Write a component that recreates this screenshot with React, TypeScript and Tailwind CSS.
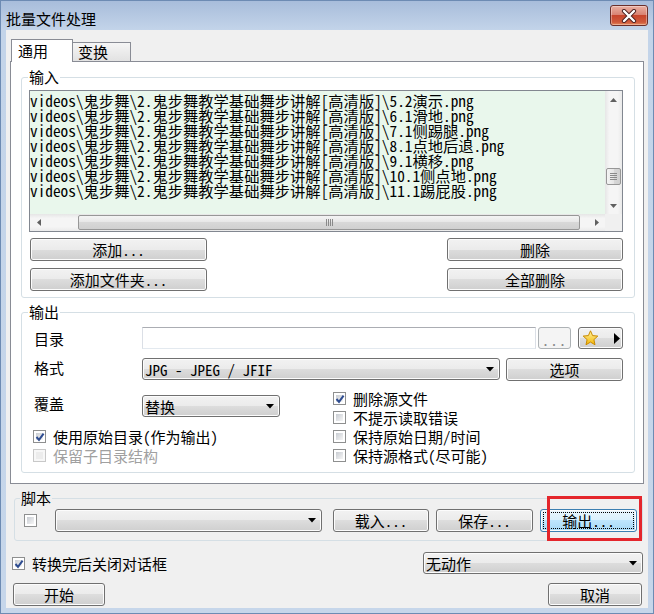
import React from "react";

const FONT = "font-['Noto_Sans_Mono_CJK_SC','Noto_Sans_CJK_SC',sans-serif]";
const BTN =
  "flex items-center justify-center rounded-[3px] border border-[#707070] bg-[linear-gradient(#f2f2f2_0%,#ebebeb_50%,#dddddd_50%,#cfcfcf_100%)] shadow-[inset_0_0_0_1px_#fcfcfc] text-[15px] leading-[17px] text-black";

function Btn({ className = "", children }: { className?: string; children?: React.ReactNode }) {
  return <div className={`${BTN} ${className}`}>{children}</div>;
}

function FocusBtn({ className = "", children }: { className?: string; children?: React.ReactNode }) {
  return (
    <div
      className={`relative flex items-center justify-center rounded-[3px] border border-[#3c7fb1] bg-[linear-gradient(#eaf6fd_0%,#d9f0fc_50%,#bee6fd_50%,#a7d9f5_100%)] shadow-[inset_0_0_0_1px_#fcfcfc] text-[15px] leading-[17px] ${className}`}
    >
      <span className="absolute inset-[2px] border border-dotted border-black" />
      {children}
    </div>
  );
}

function Arrow() {
  return (
    <svg width="8" height="5" viewBox="0 0 8 5" className="shrink-0">
      <path d="M0 0H8L4 4.5Z" fill="#000" />
    </svg>
  );
}

function Combo({ className = "", children }: { className?: string; children?: React.ReactNode }) {
  return (
    <div
      className={`flex items-center rounded-[3px] border border-[#707070] bg-[linear-gradient(#f2f2f2_0%,#ebebeb_50%,#dddddd_50%,#cfcfcf_100%)] shadow-[inset_0_0_0_1px_#fcfcfc] pl-[2px] pr-[5px] text-[15px] leading-[17px] ${className}`}
    >
      <span className="flex-1 whitespace-nowrap">{children}</span>
      <Arrow />
    </div>
  );
}

function Box({ checked = false, disabled = false }: { checked?: boolean; disabled?: boolean }) {
  return (
    <div
      className={`relative shrink-0 w-[13px] h-[13px] border p-[2px] ${
        disabled ? "border-[#c8c8c8] bg-[#f7f7f7]" : "border-[#8e8f8f] bg-white"
      }`}
    >
      <div
        className={`w-full h-full ${
          disabled ? "bg-[#ececec]" : "bg-[linear-gradient(135deg,#c8ccd2,#f6f6f6)]"
        }`}
      />
      {checked && (
        <svg className="absolute left-[1px] top-[1px]" width="10" height="10" viewBox="0 0 10 10">
          <path d="M1.5 5L4 7.8L8.6 1.6" stroke="#2e4c90" strokeWidth="2" fill="none" />
        </svg>
      )}
    </div>
  );
}

function Check({
  label,
  checked = false,
  disabled = false,
  className = "",
}: {
  label: string;
  checked?: boolean;
  disabled?: boolean;
  className?: string;
}) {
  return (
    <div className={`flex items-center h-[19px] ${className}`}>
      <Box checked={checked} disabled={disabled} />
      <span className={`ml-[7px] text-[15px] leading-[17px] whitespace-nowrap ${disabled ? "text-[#a0a0a0]" : "text-black"}`}>
        {label}
      </span>
    </div>
  );
}

function Tri({ dir }: { dir: "up" | "down" | "left" | "right" }) {
  const d =
    dir === "up"
      ? "M0 4L3.5 0L7 4Z"
      : dir === "down"
      ? "M0 0L7 0L3.5 4Z"
      : dir === "left"
      ? "M4 0L4 7L0 3.5Z"
      : "M0 0L4 3.5L0 7Z";
  const w = dir === "up" || dir === "down" ? 7 : 4;
  const h = dir === "up" || dir === "down" ? 4 : 7;
  return (
    <svg width={w} height={h} viewBox={`0 0 ${w} ${h}`}>
      <path d={d} fill="#606060" />
    </svg>
  );
}

const files = ["5.2演示", "6.1滑地", "7.1侧踢腿", "8.1点地后退", "9.1横移", "10.1侧点地", "11.1踢屁股"];

function ListBox() {
  return (
    <div className="ml-[7px] mt-[12px] w-[594px] h-[142px] border border-[#828790] flex flex-col bg-[#e9f7ec]">
      <div className="flex h-[123px]">
        <div className="flex-1 pt-[2px] text-[15.3px] leading-[15px] text-black whitespace-nowrap">
          {files.map((f) => (
            <div key={f} className="h-[15px]">{`videos\\鬼步舞\\2.鬼步舞教学基础舞步讲解[高清版]\\${f}.png`}</div>
          ))}
        </div>
        <div className="w-[17px] flex flex-col bg-[linear-gradient(90deg,#e6e6e6,#f5f5f5_25%,#f5f5f5_75%,#eaeaea)]">
          <div className="h-[17px] flex items-center justify-center">
            <Tri dir="up" />
          </div>
          <div className="flex-1">
            <div className="mt-[60px] mx-[1px] h-[17px] rounded-[2px] border border-[#979797] bg-[linear-gradient(90deg,#f4f4f4,#e6e6e6_50%,#d8d8d8_50%,#d0d0d0)] flex flex-col items-center justify-center gap-[1px]">
              <div className="w-[7px] h-[1px] bg-[#8a8a8a]" />
              <div className="w-[7px] h-[1px] bg-[#8a8a8a]" />
              <div className="w-[7px] h-[1px] bg-[#8a8a8a]" />
              <div className="w-[7px] h-[1px] bg-[#8a8a8a]" />
            </div>
          </div>
          <div className="h-[17px] flex items-center justify-center">
            <Tri dir="down" />
          </div>
        </div>
      </div>
      <div className="flex h-[17px]">
        <div className="flex-1 flex bg-[linear-gradient(#e6e6e6,#f5f5f5_25%,#f5f5f5_75%,#eaeaea)]">
          <div className="w-[17px] flex items-center justify-center">
            <Tri dir="left" />
          </div>
          <div className="flex-1 flex py-[1px]">
            <div className="ml-[31px] w-[502px] rounded-[2px] border border-[#979797] bg-[linear-gradient(#f4f4f4,#e6e6e6_50%,#d8d8d8_50%,#d0d0d0)] flex items-center justify-center gap-[1px]">
              <div className="w-[1px] h-[7px] bg-[#8a8a8a]" />
              <div className="w-[1px] h-[7px] bg-[#8a8a8a]" />
              <div className="w-[1px] h-[7px] bg-[#8a8a8a]" />
              <div className="w-[1px] h-[7px] bg-[#8a8a8a]" />
            </div>
          </div>
          <div className="w-[17px] flex items-center justify-center">
            <Tri dir="right" />
          </div>
        </div>
        <div className="w-[17px] bg-[#f0f0f0]" />
      </div>
    </div>
  );
}

function Star() {
  return (
    <svg width="17" height="16" viewBox="0 0 17 16">
      <defs>
        <linearGradient id="sg" x1="0" y1="0" x2="0" y2="1">
          <stop offset="0" stopColor="#fff6a8" />
          <stop offset="1" stopColor="#f4b400" />
        </linearGradient>
      </defs>
      <path
        d="M8.5 0.8L10.6 5.6L15.8 6.1L11.9 9.6L13 14.8L8.5 12.1L4 14.8L5.1 9.6L1.2 6.1L6.4 5.6Z"
        fill="url(#sg)"
        stroke="#c98a00"
        strokeWidth="1"
        strokeLinejoin="round"
      />
    </svg>
  );
}

export default function App() {
  return (
    <div
      className={`w-[654px] h-[614px] flex flex-col bg-[linear-gradient(#a7bcda_0px,#c3d4e9_30px,#c6d6ea_100%)] shadow-[inset_0_0_0_1px_#6d8bb3] ${FONT} text-black select-none`}
    >
      {/* Title bar */}
      <div className="h-[30px] shrink-0 flex items-start">
        <span className="ml-[6px] mt-[10px] text-[15px] leading-[17px]">批量文件处理</span>
        <div className="ml-auto mr-[6px] mt-[5px] w-[38px] h-[21px] rounded-[3px] border border-[#6b2f2a] bg-[linear-gradient(#eab0a2_0%,#d98474_45%,#c7452c_50%,#cf5a3c_85%,#e68a5c_100%)] shadow-[inset_0_0_0_1px_rgba(255,255,255,0.35)] flex items-center justify-center">
          <svg width="16" height="14" viewBox="0 0 16 14">
            <path d="M3 2L13 12M13 2L3 12" stroke="#4a2020" strokeWidth="4.2" strokeLinecap="round" />
            <path d="M3 2L13 12M13 2L3 12" stroke="#ffffff" strokeWidth="2.4" strokeLinecap="round" />
          </svg>
        </div>
      </div>

      {/* Body */}
      <div className="h-[578px] shrink-0 mx-[6px] bg-[#f0f0f0] flex flex-col">
        <div className="pl-[4px] pt-[9px]">
          {/* Tabs */}
          <div className="flex h-[22px] items-start">
            <div className="relative z-10 ml-[1px] w-[62px] h-[23px] border border-b-0 border-[#898c95] bg-white pl-[6px] pt-[2px] text-[15px] leading-[17px]">
              通用
            </div>
            <div className="mt-[3px] w-[58px] h-[19px] border border-l-0 border-b-0 border-[#898c95] bg-[linear-gradient(#f5f5f5,#e2e2e2)] pl-[5px] text-[15px] leading-[17px]">
              变换
            </div>
          </div>

          {/* Panel */}
          <div className="w-[634px] h-[423px] border border-[#898c95] bg-white flex flex-col">
            {/* Input group */}
            <div className="relative ml-[10px] mt-[15px] w-[614px] h-[221px] shrink-0 border border-[#d5dfe5] rounded-[3px] flex flex-col">
              <span className="absolute left-[6px] top-[-10px] bg-white px-[1px] text-[15px] leading-[17px]">输入</span>
              <ListBox />
              <div className="mt-[6px] flex justify-between pl-[8px] pr-[11px]">
                <Btn className="w-[177px] h-[23px]">添加...</Btn>
                <Btn className="w-[176px] h-[23px]">删除</Btn>
              </div>
              <div className="mt-[7px] flex justify-between pl-[8px] pr-[11px]">
                <Btn className="w-[177px] h-[23px]">添加文件夹...</Btn>
                <Btn className="w-[176px] h-[23px]">全部删除</Btn>
              </div>
            </div>

            {/* Output group */}
            <div className="relative ml-[10px] mt-[14px] w-[614px] h-[161px] shrink-0 border border-[#d5dfe5] rounded-[3px] flex flex-col">
              <span className="absolute left-[6px] top-[-10px] bg-white px-[1px] text-[15px] leading-[17px]">输出</span>
              <div className="mt-[14px] flex h-[22px] items-center">
                <span className="ml-[12px] w-[108px] text-[15px] leading-[17px]">目录</span>
                <div className="w-[394px] h-[22px] border border-[#abadb3] border-b-[#e3e9ef] border-x-[#dbdfe6] bg-white" />
                <div className="ml-[2px] w-[33px] h-[22px] rounded-[3px] border border-[#adb2b5] bg-[#f4f4f4] flex items-end justify-center pb-[3px]">
                  <span className="text-[15px] leading-[10px] text-[#8a8a8a] tracking-[1px]">...</span>
                </div>
                <Btn className="ml-[7px] w-[45px] h-[22px] !justify-between pl-[3px] pr-[2px]">
                  <Star />
                  <svg width="6" height="11" viewBox="0 0 6 11">
                    <path d="M0 0L6 5.5L0 11Z" fill="#000" />
                  </svg>
                </Btn>
              </div>
              <div className="mt-[9px] flex h-[23px] items-center">
                <span className="ml-[12px] w-[108px] pb-[4px] text-[15px] leading-[17px]">格式</span>
                <Combo className="w-[358px] h-[22px] self-start">JPG - JPEG / JFIF</Combo>
                <Btn className="ml-[6px] w-[117px] h-[23px]">选项</Btn>
              </div>
              <div className="flex">
                <div className="w-[311px] flex flex-col">
                  <div className="mt-[14px] flex h-[22px] items-center">
                    <span className="ml-[12px] w-[108px] pb-[5px] text-[15px] leading-[17px]">覆盖</span>
                    <Combo className="w-[138px] h-[22px]">替换</Combo>
                  </div>
                  <Check className="mt-[10px] pl-[11px]" checked label="使用原始目录(作为输出)" />
                  <Check className="pl-[11px]" disabled label="保留子目录结构" />
                </div>
                <div className="mt-[8px] flex flex-col">
                  <Check checked label="删除源文件" />
                  <Check label="不提示读取错误" />
                  <Check label="保持原始日期/时间" />
                  <Check label="保持源格式(尽可能)" />
                </div>
              </div>
            </div>
          </div>
        </div>

        {/* Script group */}
        <div className="relative ml-[8px] mt-[14px] w-[629px] h-[43px] shrink-0 border border-[#d5dfe5] rounded-[3px]">
          <span className="absolute left-[5px] top-[-10px] bg-[#f0f0f0] px-[1px] text-[15px] leading-[17px]">脚本</span>
          <div className="mt-[9px] flex items-center h-[24px]">
            <div className="ml-[9px]">
              <Box />
            </div>
            <Combo className="ml-[18px] w-[267px] h-[23px]">{""}</Combo>
            <Btn className="ml-[11px] w-[96px] h-[23px]">载入...</Btn>
            <Btn className="ml-[7px] w-[97px] h-[23px]">保存...</Btn>
            <FocusBtn className="ml-[7px] w-[97px] h-[23px]">输出...</FocusBtn>
          </div>
          <div className="absolute left-[532px] top-[-3px] w-[95px] h-[45px] border-[3px] border-[#e4262c]" />
        </div>

        {/* Bottom rows */}
        <div className="mt-[11px] flex items-center h-[22px]">
          <Check className="ml-[6px]" checked label="转换完后关闭对话框" />
          <Combo className="ml-auto mr-[5px] w-[220px] h-[22px]">无动作</Combo>
        </div>
        <div className="mt-[9px] flex h-[23px]">
          <Btn className="ml-[7px] w-[92px] h-[23px]">开始</Btn>
          <Btn className="ml-auto mr-[6px] w-[94px] h-[23px]">取消</Btn>
        </div>
      </div>
    </div>
  );
}
